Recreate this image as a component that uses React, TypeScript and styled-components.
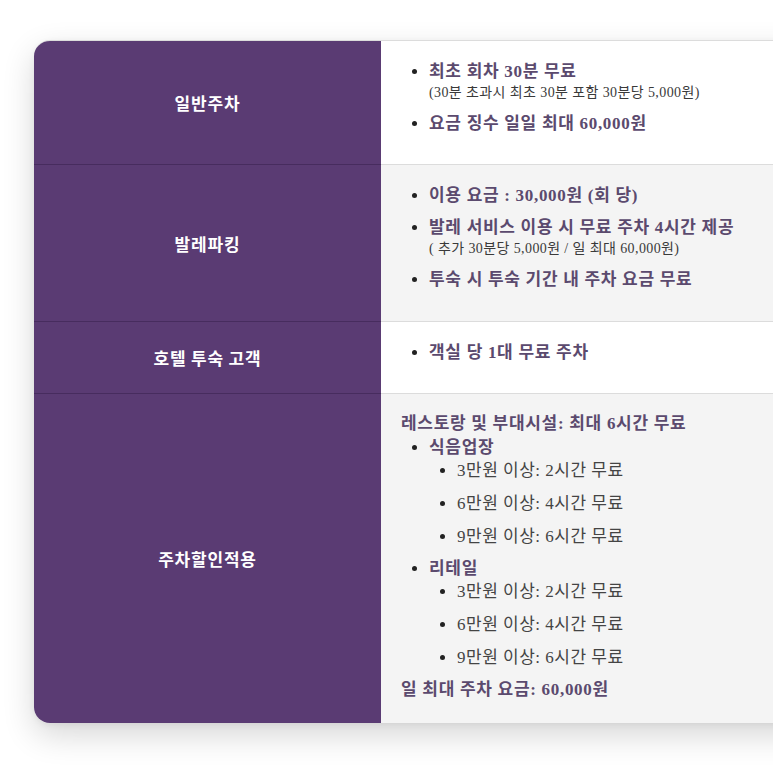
import React from "react";
import styled, { createGlobalStyle } from "styled-components";

const Global = createGlobalStyle`
  html, body { margin: 0; padding: 0; background: #ffffff; overflow: hidden; }
  body { font-family: "Liberation Serif", "Noto Sans CJK KR", sans-serif; }
`;

const Page = styled.div`
  padding: 40px 0 60px 34px;
  width: 900px;
`;

const Card = styled.div`
  display: grid;
  grid-template-columns: 347px 1fr;
  border-radius: 16px 0 0 16px;
  overflow: hidden;
  border-top: 1px solid #dcdcdc;
  box-shadow: 0 12px 32px rgba(0, 0, 0, 0.16), 0 2px 6px rgba(0, 0, 0, 0.06);
  background: #fff;
`;

const Label = styled.div<{ $last?: boolean }>`
  background: #5a3b73;
  color: #ffffff;
  display: flex;
  align-items: center;
  justify-content: center;
  font-family: "Noto Sans CJK KR", sans-serif;
  font-weight: 700;
  font-size: 17px;
  letter-spacing: 0.8px;
  border-bottom: ${(p) => (p.$last ? "none" : "1px solid #472c5e")};
`;

const Cell = styled.div<{ $shade?: boolean; $last?: boolean; $top?: number; $bottom?: number }>`
  background: ${(p) => (p.$shade ? "#f4f4f4" : "#ffffff")};
  padding: ${(p) => p.$top ?? 20}px 20px ${(p) => p.$bottom ?? 19}px 20px;
  border-bottom: ${(p) => (p.$last ? "none" : "1px solid #dcdcdc")};
`;

const List = styled.ul`
  margin: 0;
  padding-left: 28px;
  list-style: disc;
`;

const Item = styled.li`
  color: #5b4a6e;
  font-weight: 700;
  font-size: 17px;
  letter-spacing: 0.7px;
  line-height: 22px;
  margin-bottom: 10px;
  &::marker { color: #222; }
`;

const Note = styled.div`
  color: #3a3a3a;
  font-weight: 400;
  font-size: 14px;
  letter-spacing: 0.4px;
  line-height: 20px;
`;

const Heading = styled.div`
  color: #5b4a6e;
  font-weight: 700;
  font-size: 17px;
  letter-spacing: 0.7px;
  line-height: 22px;
  margin-bottom: 2px;
`;

const GroupItem = styled.li`
  color: #5b4a6e;
  font-weight: 700;
  font-size: 17px;
  letter-spacing: 0.7px;
  line-height: 22px;
  margin-bottom: 2px;
  & + & { margin-top: 2px; }
  &::marker { color: #222; }
`;

const SubList = styled.ul`
  margin: 0;
  padding-left: 28px;
  list-style: disc;
`;

const SubItem = styled.li`
  color: #444;
  font-weight: 400;
  font-size: 17px;
  letter-spacing: 0.5px;
  line-height: 23px;
  margin-bottom: 10px;
  &::marker { color: #222; }
`;

const Footer = styled.div`
  color: #5b4a6e;
  font-weight: 700;
  font-size: 17px;
  letter-spacing: 0.7px;
  line-height: 22px;
`;

const tiers = ["3만원 이상: 2시간 무료", "6만원 이상: 4시간 무료", "9만원 이상: 6시간 무료"];

export default function App() {
  return (
    <>
      <Global />
      <Page>
        <Card>
          <Label>일반주차</Label>
          <Cell>
            <List>
              <Item>
                최초 회차 30분 무료
                <Note>(30분 초과시 최초 30분 포함 30분당 5,000원)</Note>
              </Item>
              <Item>요금 징수 일일 최대 60,000원</Item>
            </List>
          </Cell>

          <Label>발레파킹</Label>
          <Cell $shade $top={20} $bottom={20}>
            <List>
              <Item>이용 요금 : 30,000원 (회 당)</Item>
              <Item>
                발레 서비스 이용 시 무료 주차 4시간 제공
                <Note>( 추가 30분당 5,000원 / 일 최대 60,000원)</Note>
              </Item>
              <Item>투숙 시 투숙 기간 내 주차 요금 무료</Item>
            </List>
          </Cell>

          <Label>호텔 투숙 고객</Label>
          <Cell $top={20}>
            <List>
              <Item>객실 당 1대 무료 주차</Item>
            </List>
          </Cell>

          <Label $last>주차할인적용</Label>
          <Cell $shade $last $top={19} $bottom={22}>
            <Heading>레스토랑 및 부대시설: 최대 6시간 무료</Heading>
            <List>
              <GroupItem>
                식음업장
                <SubList>
                  {tiers.map((t) => (
                    <SubItem key={"a" + t}>{t}</SubItem>
                  ))}
                </SubList>
              </GroupItem>
              <GroupItem>
                리테일
                <SubList>
                  {tiers.map((t) => (
                    <SubItem key={"b" + t}>{t}</SubItem>
                  ))}
                </SubList>
              </GroupItem>
            </List>
            <Footer>일 최대 주차 요금: 60,000원</Footer>
          </Cell>
        </Card>
      </Page>
    </>
  );
}
